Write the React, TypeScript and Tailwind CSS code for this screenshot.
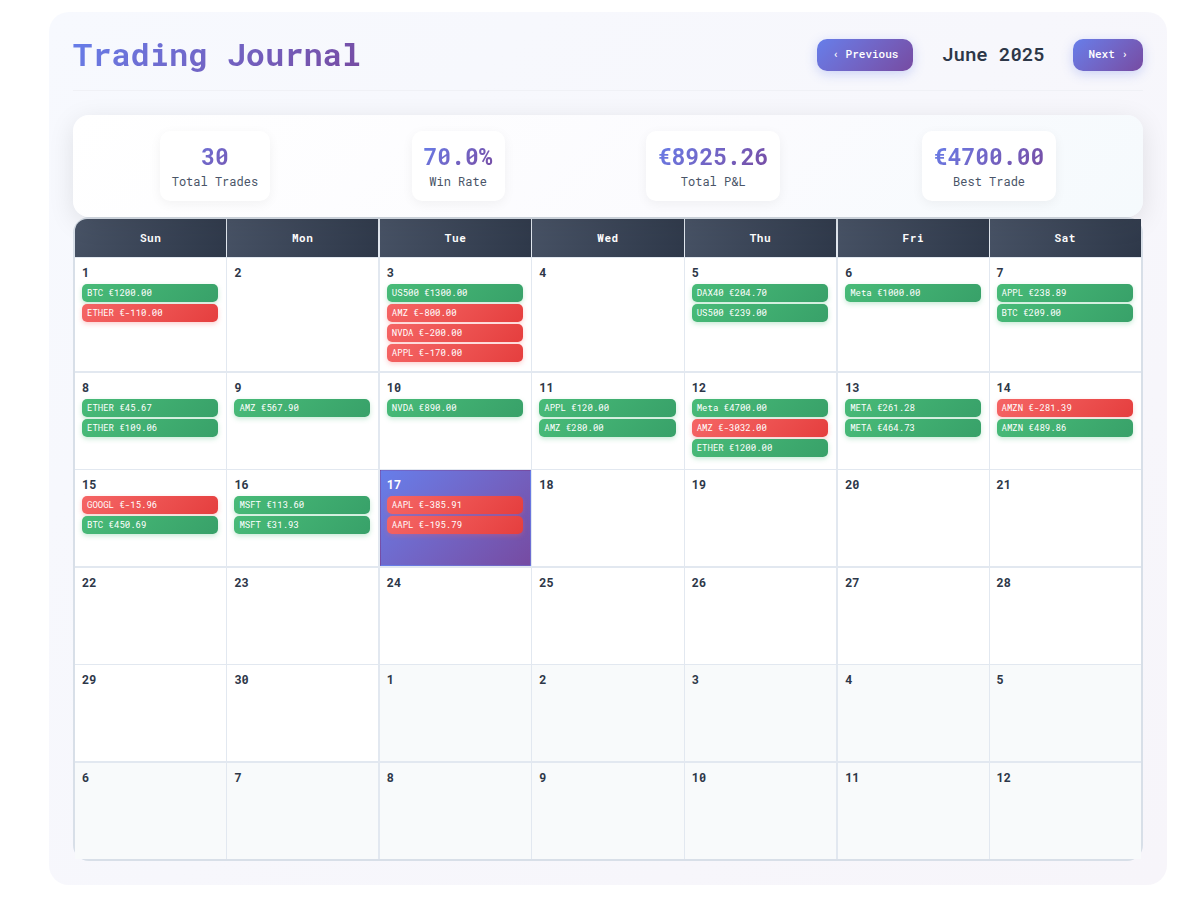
type Trade = { symbol: string; amount: number };
type Day = { day: number; trades?: [string, number][]; outside?: boolean; today?: boolean };

const weekdays = ['Sun', 'Mon', 'Tue', 'Wed', 'Thu', 'Fri', 'Sat'];

const stats = [
  { value: '30', label: 'Total Trades' },
  { value: '70.0%', label: 'Win Rate' },
  { value: '€8925.26', label: 'Total P&L' },
  { value: '€4700.00', label: 'Best Trade' },
];

const tradesByDay: Record<number, [string, number][]> = {
  1: [['BTC', 1200], ['ETHER', -110]],
  3: [['US500', 1300], ['AMZ', -800], ['NVDA', -200], ['APPL', -170]],
  5: [['DAX40', 204.7], ['US500', 239]],
  6: [['Meta', 1000]],
  7: [['APPL', 238.89], ['BTC', 209]],
  8: [['ETHER', 45.67], ['ETHER', 109.06]],
  9: [['AMZ', 567.9]],
  10: [['NVDA', 890]],
  11: [['APPL', 120], ['AMZ', 280]],
  12: [['Meta', 4700], ['AMZ', -3032], ['ETHER', 1200]],
  13: [['META', 261.28], ['META', 464.73]],
  14: [['AMZN', -281.39], ['AMZN', 489.86]],
  15: [['GOOGL', -15.96], ['BTC', 450.69]],
  16: [['MSFT', 113.6], ['MSFT', 31.93]],
  17: [['AAPL', -385.91], ['AAPL', -195.79]],
};

const days: Day[] = Array.from({ length: 42 }, (_, i) =>
  i < 30
    ? { day: i + 1, trades: tradesByDay[i + 1], today: i + 1 === 17 }
    : { day: i - 29, outside: true },
);

function columnRule(col: number) {
  if (col === 1) return 'border-r border-r-[#e2e8f0]';
  if (col === 5) return 'border-l border-l-[#e2e8f0]';
  return '';
}

function TradePill({ symbol, amount }: Trade) {
  const tone =
    amount >= 0
      ? 'from-[#48bb78] to-[#38a169] shadow-[0_2px_5px_rgba(72,187,120,0.3)]'
      : 'from-[#f56565] to-[#e53e3e] shadow-[0_2px_5px_rgba(245,101,101,0.3)]';
  return (
    <li className={`h-[18px] truncate rounded-[5px] bg-linear-135 px-[5px] text-[9px] leading-[18px] font-normal text-white ${tone}`}>
      {symbol} €{amount.toFixed(2)}
    </li>
  );
}

function DayCell({ data, index }: { data: Day; index: number }) {
  const row = Math.floor(index / 7);
  const rowRule = row % 2 === 0 ? 'border-b border-b-[#e2e8f0]' : '';
  const height = row % 2 === 0 && row > 0 && !data.today ? 'min-h-[97px]' : 'min-h-24';
  const tone = data.today
    ? 'mb-px border border-transparent bg-linear-135 from-[#667eea] to-[#764ba2] text-white pt-[6px] pl-[6px] pr-[7px]'
    : `${data.outside ? 'bg-[#f8fafb]' : 'bg-white'} text-[#2d3748] pt-[7px] pl-[7px] pr-[8px] ${columnRule(index % 7)} ${rowRule}`;
  return (
    <div className={`min-w-0 pb-[9px] ${height} ${tone}`}>
      <div className="mb-[5px] text-xs leading-[14px] font-bold">{data.day}</div>
      {data.trades && (
        <ul className="flex flex-col gap-[2px]">
          {data.trades.map(([symbol, amount], i) => (
            <TradePill key={i} symbol={symbol} amount={amount} />
          ))}
        </ul>
      )}
    </div>
  );
}

const navButton =
  'h-8 rounded-[10px] bg-linear-135 from-[#667eea] to-[#764ba2] px-[15px] pb-[2px] text-[11px] font-medium text-white shadow-[0_3px_12px_rgba(102,126,234,0.3)]';

export default function App() {
  return (
    <div className="min-h-screen bg-white pt-3 pr-[35px] pb-5 pl-[49px] font-['Roboto_Mono','Liberation_Mono',monospace]">
      <main className="rounded-[20px] bg-linear-135 from-[#f7f9fe] to-[#f7f5fa] p-6">
        <header className="mb-6 flex items-start justify-between border-b border-[#f0f1f6] pb-4">
          <h1 className="bg-linear-135 from-[#667eea] to-[#764ba2] bg-clip-text text-[32px] leading-9 font-bold text-transparent">
            Trading Journal
          </h1>
          <nav className="flex items-center gap-4 py-[3px]">
            <button type="button" className={navButton}>‹ Previous</button>
            <h2 className="min-w-32 pb-[2px] text-center text-[19px] leading-6 font-semibold text-[#2d3748]">June 2025</h2>
            <button type="button" className={navButton}>Next ›</button>
          </nav>
        </header>

        <section className="relative flex justify-around rounded-2xl bg-linear-135 from-white via-[#fbfbfe] via-60% to-[#f5fafd] p-4 shadow-[0_6px_26px_rgba(0,0,0,0.1)]">
          {stats.map((s) => (
            <div key={s.label} className="rounded-[10px] bg-white px-3 pt-[9px] pb-[11px] text-center shadow-[0_3px_12px_rgba(0,0,0,0.05)]">
              <div className="bg-linear-135 from-[#667eea] to-[#764ba2] bg-clip-text text-[23px] leading-8 font-bold text-transparent">
                {s.value}
              </div>
              <div className="text-xs leading-[18px] font-normal text-[#4a5568]">{s.label}</div>
            </div>
          ))}
        </section>

        <section className="grid grid-cols-7 gap-px rounded-2xl border-2 border-[#d8dfe8] bg-[#e2e8f0]">
          {weekdays.map((d, i) => (
            <div
              key={d}
              className={`bg-linear-135 from-[#4a5568] to-[#2d3748] text-center text-[11px] leading-[38px] font-bold tracking-wider text-white ${columnRule(i)} ${i === 0 ? 'rounded-tl-[12px]' : ''}`}
            >
              {d}
            </div>
          ))}
          {days.map((d, i) => (
            <DayCell key={i} data={d} index={i} />
          ))}
        </section>
      </main>
    </div>
  );
}
